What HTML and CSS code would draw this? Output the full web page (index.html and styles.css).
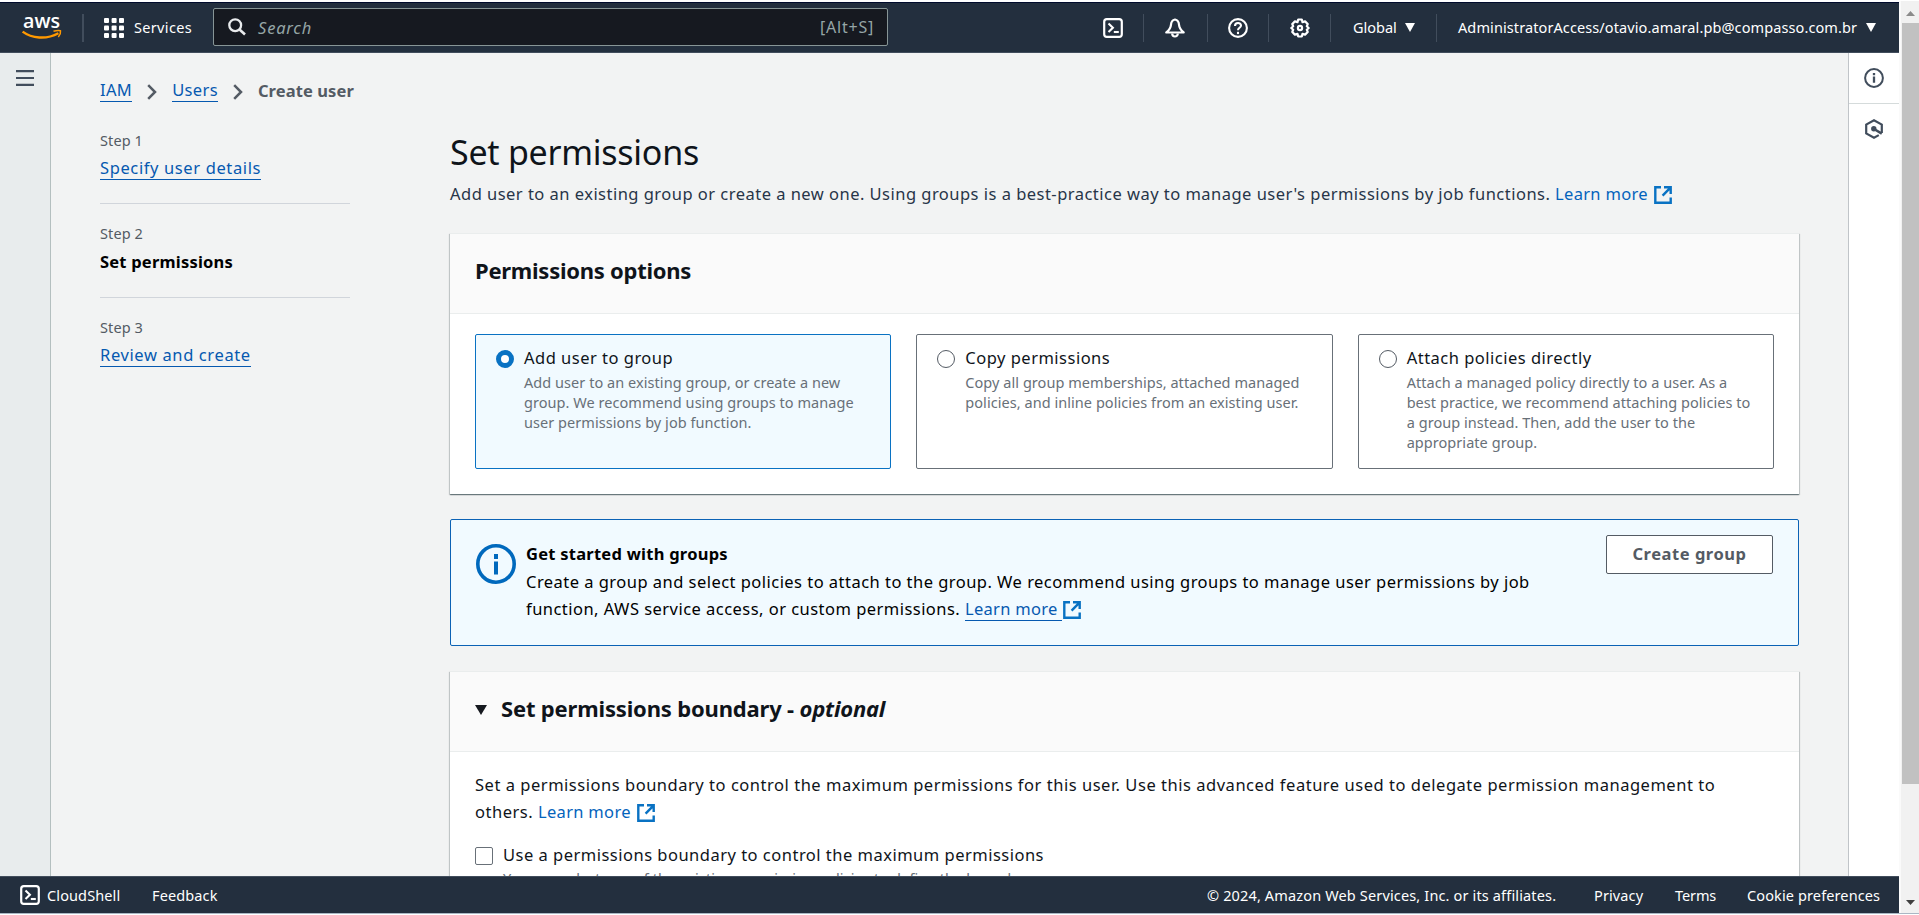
FILE: index.html
```
<!DOCTYPE html>
<html lang="en">
<head>
<meta charset="utf-8">
<title>Create user | IAM</title>
<link rel="stylesheet" href="styles.css">
</head>
<body>
<svg class="defs" width="0" height="0">
  <symbol id="shell" viewBox="0 0 20 20"><rect x="1.2" y="1.2" width="17.6" height="17.6" rx="2.6" fill="none" stroke="currentColor" stroke-width="2.2"/><path d="M5.5 5.5l4.4 4.3-4.4 4.3" fill="none" stroke="currentColor" stroke-width="2.1"/><path d="M10.8 14h5" stroke="currentColor" stroke-width="2.1"/></symbol>
  <symbol id="external" viewBox="0 0 18 18"><path d="M7 1.3H1.3v15.4h15.4V11.5M10 1.3h6.7V8M16.2 1.8L8.6 9.6" fill="none" stroke="currentColor" stroke-width="2.4"/></symbol>
  <symbol id="chevron" viewBox="0 0 10 16"><path d="M1.2 1.2L8 8l-6.800 6.800" fill="none" stroke="currentColor" stroke-width="2.500"/></symbol>
  <symbol id="caret" viewBox="0 0 10 9"><path d="M0 0h10L5 9z" fill="currentColor"/></symbol>
</svg>
<div class="page">
  <div class="window">
    <header class="topbar">
      <svg class="logo" viewBox="0 0 40 26"><text x="1" y="13.2" textLength="37" lengthAdjust="spacingAndGlyphs" class="logo-text">aws</text><path d="M.6 16.6c9 6.7 23.5 8.4 35.8 1.6" fill="none" stroke="#f90" stroke-width="2.4"/><path d="M31.5 16.3c2.8-.8 5.6-1 7-.5.3 1.8-.6 4.500-2.200 6.300" fill="none" stroke="#f90" stroke-width="1.500"/></svg>
      <span class="bar bar-logo"></span>
      <svg class="grid-icon" viewBox="0 0 20 20" fill="#fff"><rect width="5" height="5" rx="1"/><rect x="7.600" width="5" height="5" rx="1"/><rect x="15" width="5" height="5" rx="1"/><rect y="7.600" width="5" height="5" rx="1"/><rect x="7.600" y="7.600" width="5" height="5" rx="1"/><rect x="15" y="7.600" width="5" height="5" rx="1"/><rect y="15" width="5" height="5" rx="1"/><rect x="7.600" y="15" width="5" height="5" rx="1"/><rect x="15" y="15" width="5" height="5" rx="1"/></svg>
      <span class="services">Services</span>
      <div class="search">
        <svg class="lens" viewBox="0 0 18 18"><circle cx="7.200" cy="7.200" r="5.900" fill="none" stroke="#e9ebed" stroke-width="2.300"/><path d="M11.500 11.500l5.500 5" stroke="#e9ebed" stroke-width="2.600"/></svg>
        <span class="search-hint">Search</span><span class="search-key">[Alt+S]</span>
      </div>
      <div class="tools">
        <span class="tool"><svg class="i20"><use href="#shell"/></svg></span>
        <span class="tool tool-bell"><svg class="i20" viewBox="0 0 20 20" fill="none" stroke="#fff" stroke-width="2.200" stroke-linejoin="round"><path d="M10 1.500c-2.800.6-3.800 2.600-4 5.200-.3 3.300-1.500 5.400-4.700 7.800h17.400c-3.200-2.400-4.400-4.500-4.700-7.800-.2-2.600-1.200-4.600-4-5.200z"/><path d="M7.200 15.500c0 4 5.600 4 5.600 0"/></svg></span>
        <span class="tool tool-help"><svg class="i20" viewBox="0 0 20 20" fill="none" stroke="#fff" stroke-width="2.100"><circle cx="10" cy="10" r="8.900"/><path d="M7 8c0-4 6-3.900 6-.5 0 2.300-3 2.200-3 4.700"/><path d="M10 13.800v2.300"/></svg></span>
        <span class="tool tool-gear"><svg class="i20" viewBox="0 0 20 20" fill="none" stroke="#fff" stroke-width="2.200" stroke-linejoin="round"><path d="M8.200 1.500h3.600l.7 2.600 2.600-.7 2.600 2.600-.9 2.300 1.900 1.700-1.900 1.700.9 2.300-2.600 2.600-2.600-.7-.7 2.600H8.200l-.7-2.600-2.600.7-2.600-2.600.9-2.300L1.300 10l1.900-1.700L2.300 6l2.600-2.600 2.600.7z"/><circle cx="10" cy="10" r="2.100"/></svg></span>
        <span class="region">Global<svg class="caret"><use href="#caret"/></svg></span>
        <span class="account"><span class="account-name">AdministratorAccess/otavio.amaral.pb@compasso.com.br</span><svg class="caret"><use href="#caret"/></svg></span>
      </div>
    </header>

    <div class="middle">
      <aside class="rail"><svg class="menu" viewBox="0 0 18 16"><path d="M0 1.200h18M0 8h18M0 14.800h18" stroke="#414d5c" stroke-width="2.200"/></svg></aside>
      <div class="content">
        <nav class="crumbs"><a class="ul">IAM</a><svg class="chev"><use href="#chevron"/></svg><a class="ul users">Users</a><svg class="chev"><use href="#chevron"/></svg><b class="here">Create user</b></nav>
        <div class="columns">
          <ol class="steps">
            <li class="step"><span class="step-no">Step 1</span><a class="ul wide">Specify user details</a></li>
            <li class="step"><span class="step-no">Step 2</span><b class="current">Set permissions</b></li>
            <li class="step"><span class="step-no">Step 3</span><a class="ul wide">Review and create</a></li>
          </ol>
          <main class="main">
            <h1 class="title">Set permissions</h1>
            <p class="lead">Add user to an existing group or create a new one. Using groups is a best-practice way to manage user's permissions by job functions. <a class="link">Learn more <svg class="ext"><use href="#external"/></svg></a></p>

            <section class="panel">
              <h2 class="panel-head">Permissions options</h2>
              <div class="cards">
                <div class="card selected"><span class="radio on"></span><div><div class="card-title">Add user to group</div><div class="card-text">Add user to an existing group, or create a new<br>group. We recommend using groups to manage<br>user permissions by job function.</div></div></div>
                <div class="card"><span class="radio"></span><div><div class="card-title">Copy permissions</div><div class="card-text">Copy all group memberships, attached managed<br>policies, and inline policies from an existing user.</div></div></div>
                <div class="card"><span class="radio"></span><div><div class="card-title">Attach policies directly</div><div class="card-text">Attach a managed policy directly to a user. As a<br>best practice, we recommend attaching policies to<br>a group instead. Then, add the user to the<br>appropriate group.</div></div></div>
              </div>
            </section>

            <section class="alert">
              <svg class="alert-icon" viewBox="0 0 40 40" fill="none" stroke="#0069bd"><circle cx="20" cy="20" r="18.200" stroke-width="3.600"/><path d="M20 10v5M20 17.500v13" stroke-width="4"/></svg>
              <div class="alert-body"><b class="alert-title">Get started with groups</b><p class="alert-text">Create a group and select policies to attach to the group. We recommend using groups to manage user permissions by job<br>function, AWS service access, or custom permissions. <a class="link"><span class="ul">Learn more </span><svg class="ext"><use href="#external"/></svg></a></p></div>
              <button class="button">Create group</button>
            </section>

            <section class="panel boundary">
              <h2 class="panel-head"><svg class="tri" viewBox="0 0 12 10"><path d="M0 0h12L6 10z" fill="#16191f"/></svg><span>Set permissions boundary - <i class="optional">optional</i></span></h2>
              <div class="panel-body">
                <p class="body-text">Set a permissions boundary to control the maximum permissions for this user. Use this advanced feature used to delegate permission management to<br>others. <a class="link">Learn more <svg class="ext"><use href="#external"/></svg></a></p>
                <div class="check"><span class="box"></span><div><div class="check-label">Use a permissions boundary to control the maximum permissions</div><div class="card-text">You can select one of the existing permission policies to define the boundary.</div></div></div>
              </div>
            </section>
          </main>
        </div>
      </div>
      <aside class="help">
        <div class="help-item"><svg class="i20" viewBox="0 0 20 20" fill="none" stroke="#414d5c"><circle cx="10" cy="10" r="8.900" stroke-width="2"/><path d="M10 5v2.200M10 8.500v6.300" stroke-width="2.300"/></svg></div>
        <div class="help-item hex"><svg class="i20" viewBox="0 0 20 20" fill="none" stroke="#414d5c" stroke-width="2.200"><path d="M17.800 14V5.600L10 1.300 2.200 5.600v8.800L10 18.700l4.800-2.600"/><circle cx="9.800" cy="9.800" r="2.700" fill="#414d5c" stroke="none"/><path d="M10 10l7.800 4.600" stroke-width="2.600"/></svg></div>
      </aside>
    </div>

    <footer class="footer">
      <svg class="i20"><use href="#shell"/></svg><span class="shell-label">CloudShell</span><span class="feedback">Feedback</span>
      <span class="legal">© 2024, Amazon Web Services, Inc. or its affiliates.</span><span class="privacy">Privacy</span><span class="terms">Terms</span><span class="cookies">Cookie preferences</span>
    </footer>
  </div>
  <div class="scrollbar"><svg class="arrow" viewBox="0 0 9 5"><path d="M0 5h9L4.500 0z" fill="#8b8b8b"/></svg><div class="thumb"></div><svg class="arrow down" viewBox="0 0 9 5"><path d="M0 0h9L4.500 5z" fill="#404040"/></svg></div>
</div>
</body>
</html>
```
FILE: styles.css
```
* { box-sizing: border-box; }
body { margin: 0; height: 915px; overflow: hidden; background: #fff; color: #0f141a; font: 16.5px/27px "Noto Sans", "Open Sans", sans-serif; letter-spacing: .49px; }
p, h1, h2, ol { margin: 0; padding: 0; }
svg { display: block; flex: none; }
.defs { position: absolute; }
.page { display: flex; height: 914px; padding-top: 1px; border-bottom: 1px solid #aab7c4; }
.window { width: 1899px; height: 911px; margin-top: 1px; display: flex; flex-direction: column; }
.i20 { width: 20px; height: 20px; }

.topbar { flex: none; height: 51px; background: #232f3e; border-top: 1px solid #000b2c; border-bottom: 1px solid #414d5c; color: #fff; display: flex; align-items: center; font-size: 14.5px; letter-spacing: .1px; }
.logo { width: 40px; height: 26px; margin-left: 22px; overflow: visible; }
.logo-text { font: 600 19px "Open Sans", sans-serif; fill: #fff; letter-spacing: 0; }
.bar { width: 2px; height: 28px; background: #414d5c; }
.bar-logo { margin-left: 20px; }
.grid-icon { width: 20px; height: 20px; margin-left: 20px; }
.services { margin-left: 10px; width: 79px; letter-spacing: .33px; }
.search { width: 675px; height: 38px; margin-top: -1px; background: #161920; border: 1px solid #879596; border-radius: 2px; display: flex; align-items: center; padding: 0 13px 0 14px; color: #95a5a6; font-size: 16.5px; }
.lens { width: 18px; height: 18px; }
.search-hint { margin-left: 12px; font-style: italic; letter-spacing: .8px; }
.search-key { margin-left: auto; font-size: 16px; letter-spacing: .77px; }
.tools { display: flex; align-items: center; margin-left: 215px; }
.tool { display: flex; padding-right: 20px; height: 28px; align-items: center; border-right: 1px solid #414d5c; }
.tool-bell { padding-left: 21px; padding-right: 22px; }
.tool-help { padding-left: 20px; }
.tool-gear { padding-left: 21px; }
.region, .account { display: flex; align-items: center; height: 28px; }
.region { width: 106px; padding-left: 22px; border-right: 1px solid #414d5c; letter-spacing: 0; }
.account { padding-left: 21px; }
.account-name { width: 400px; }
.caret { width: 10px; height: 9px; margin-left: 8px; }

.middle { flex: 1; min-height: 0; display: flex; background: #f2f3f3; overflow: hidden; }
.rail { width: 51px; flex: none; background: #e8eced; border-right: 1px solid #b4bfbf; padding: 17px 0 0 16px; }
.menu { width: 18px; height: 16px; }
.content { flex: 1; padding: 24px 0 0 49px; }
.help { width: 51px; flex: none; background: #fff; border-left: 1px solid #c0c4c8; }
.help-item { height: 51px; border-bottom: 1px solid #d5dbdb; padding: 15px 0 0 15px; }
.hex { border: 0; }

.crumbs { display: flex; align-items: center; height: 27px; color: #545b64; }
.crumbs .ul { letter-spacing: .35px; }
.chev { width: 10px; height: 16px; margin: 2px 14px 0 15px; }
.here { letter-spacing: .1px; margin-left: 1px; }
.users { margin-left: 1px; }
.ul { color: #0659b0; border-bottom: 1px solid #0659b0; display: inline-block; line-height: 22px; }
.wide { letter-spacing: .62px; align-self: flex-start; margin: 2px 0; }

.columns { display: flex; margin-top: 26px; }
.steps { width: 250px; flex: none; list-style: none; }
.step { height: 94px; display: flex; flex-direction: column; border-bottom: 1px solid #d1d5db; padding-top: 20px; }
.step:first-child { padding-top: 0; height: 74px; }
.step + .step { padding-top: 19px; }
.step:last-child { border: 0; }
.step-no { font-size: 14.5px; line-height: 20px; letter-spacing: .1px; color: #545b64; margin-bottom: 5px; }
.current { letter-spacing: .21px; color: #000; }

.main { width: 1349px; margin-left: 100px; }
.title { font-weight: 400; font-size: 34px; line-height: 44px; letter-spacing: -.26px; }
.lead { margin-top: 6px; color: #273548; white-space: nowrap; letter-spacing: .475px; }
.link { color: #0463bc; letter-spacing: .3px; }
.ext { display: inline-block; width: 18px; height: 18px; vertical-align: -4px; color: #0972c3; margin-left: 2px; }

.panel { margin-top: 26px; background: #fff; box-shadow: 0 1px 1px rgba(0,28,36,.4), 1px 1px 1px rgba(0,28,36,.15), -1px 1px 1px rgba(0,28,36,.15); border-top: 1px solid #eaeded; }
.panel-head { height: 80px; background: #fafafa; border-bottom: 1px solid #eaeded; padding: 21px 25px 0; font-size: 22px; line-height: 30px; letter-spacing: -.26px; display: flex; white-space: nowrap; }
.cards { display: grid; grid-template-columns: repeat(3, 1fr); gap: 25px; padding: 20px 25px 25px; }
.card { height: 135px; border: 1px solid #687078; border-radius: 2px; display: flex; padding: 11px 0 0 20px; white-space: nowrap; }
.selected { background: #f1faff; border-color: #0972c3; }
.radio { width: 18px; height: 18px; flex: none; border: 1px solid #545b64; border-radius: 50%; margin: 4px 10px 0 0; background: #fff; }
.radio.on { border: 5.500px solid #0972c3; }
.card-title { line-height: 24px; margin-bottom: 2px; }
.card-text { font-size: 14.5px; line-height: 20px; letter-spacing: .05px; color: #687078; }

.alert { margin-top: 25px; height: 127px; border: 1px solid #0b62b5; border-radius: 2px; background: #f1faff; display: flex; padding: 20px 25px 0 25px; color: #000; letter-spacing: .475px; }
.alert-icon { width: 40px; height: 40px; margin-top: 4px; }
.alert-body { margin-left: 10px; flex: 1; white-space: nowrap; }
.alert-title { display: block; line-height: 28px; letter-spacing: .25px; }
.alert .ul { white-space: pre; }
.alert .ext { margin-left: 1px; }
.alert-text { letter-spacing: .465px; }
.button { width: 167px; height: 39px; margin-top: -5px; background: #fff; border: 1px solid #545b64; border-radius: 2px; color: #545b64; font: 700 16.5px "Noto Sans", sans-serif; letter-spacing: .53px; padding: 0 0 2px; }

.boundary { margin-top: 25px; height: 400px; }
.tri { width: 12px; height: 10px; margin: 12px 14px 0 0; }
.boundary .panel-head { letter-spacing: -.17px; }
.boundary .optional { letter-spacing: -.2px; }
.panel-body { padding: 19px 25px 0; }
.body-text { white-space: nowrap; letter-spacing: .523px; }
.check { display: flex; margin-top: 18px; }
.box { width: 18px; height: 18px; border: 1px solid #687078; border-radius: 2px; margin: 4px 10px 0 0; }
.check-label { line-height: 24px; margin-bottom: 1px; }
.check .card-text { letter-spacing: .12px; }

.footer { flex: none; height: 37px; background: #232f3e; border-top: 1px solid #414d5c; color: #fff; display: flex; align-items: center; padding-left: 20px; font-size: 14.5px; letter-spacing: .12px; white-space: nowrap; }
.shell-label { margin-left: 7px; width: 105px; }
.legal { margin-left: auto; width: 387px; letter-spacing: .15px; }
.privacy { width: 81px; }
.terms { width: 72px; letter-spacing: -.1px; }
.cookies { width: 152px; }

.scrollbar { width: 20px; background: #f1f1f1; border-left: 2px solid #fafafa; display: flex; flex-direction: column; align-items: center; }
.arrow { width: 9px; height: 5px; margin-top: 10px; }
.thumb { width: 17px; height: 761px; background: #c1c1c1; margin-top: 7px; }
.down { margin-top: 116px; }
```
